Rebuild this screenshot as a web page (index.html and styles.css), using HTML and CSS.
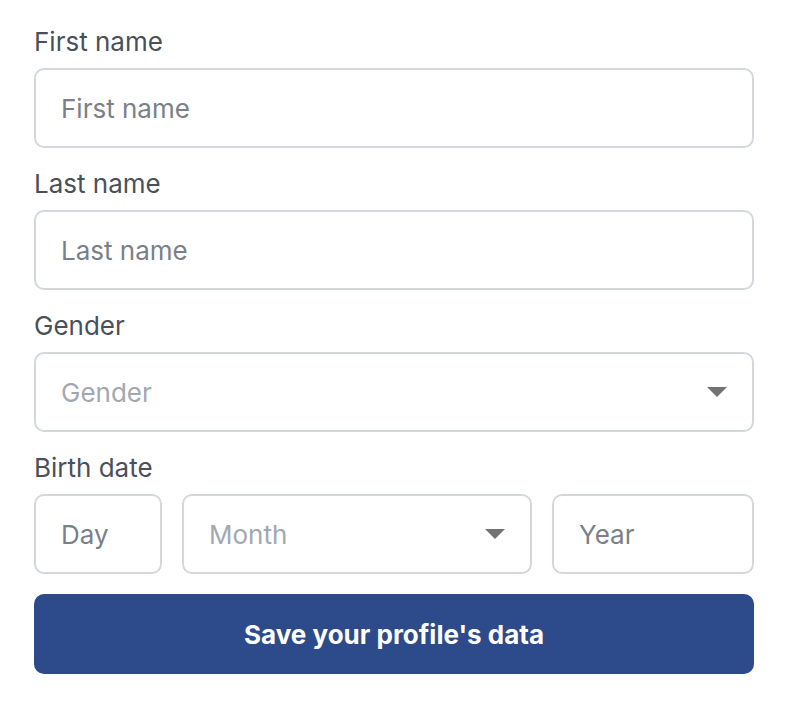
FILE: index.html
```html
<!DOCTYPE html>
<html lang="en">
<head>
<meta charset="utf-8">
<title>Profile</title>
<link rel="stylesheet" href="styles.css">
</head>
<body>
<form class="form">
  <div class="field">
    <label class="label">First name</label>
    <div class="control"><span class="placeholder">First name</span></div>
  </div>
  <div class="field">
    <label class="label">Last name</label>
    <div class="control"><span class="placeholder">Last name</span></div>
  </div>
  <div class="field">
    <label class="label">Gender</label>
    <div class="control select"><span class="placeholder light">Gender</span><span class="caret"></span></div>
  </div>
  <div class="field">
    <label class="label">Birth date</label>
    <div class="date-row">
      <div class="control"><span class="placeholder">Day</span></div>
      <div class="control select"><span class="placeholder light">Month</span><span class="caret"></span></div>
      <div class="control"><span class="placeholder">Year</span></div>
    </div>
  </div>
  <button type="button" class="btn">Save your profile's data</button>
</form>
</body>
</html>
```
FILE: styles.css
```css
* { box-sizing: border-box; }
html, body { margin: 0; background: #ffffff; }
body {
  font-family: Inter, "Noto Sans", sans-serif;
  padding: 24px 32px 0 34px;
}
.form { width: 720px; display: flex; flex-direction: column; }
.field { display: flex; flex-direction: column; margin-bottom: 18px; }
.field:last-of-type { margin-bottom: 20px; }
.label {
  font-size: 26px;
  line-height: 36px;
  color: #4a5059;
  margin-bottom: 8px;
}
.control {
  height: 80px;
  border: 2px solid #d4d8de;
  border-radius: 10px;
  display: flex;
  align-items: center;
  padding: 0 24px 0 25px;
  background: #fff;
}
.placeholder {
  font-size: 26px;
  color: #7a8089;
  flex: 1;
}
.placeholder.light { color: #a3a8b0; }
.caret {
  width: 0; height: 0;
  border-left: 10px solid transparent;
  border-right: 10px solid transparent;
  border-top: 10px solid #737373;
  margin-right: 1px;
}
.date-row {
  display: grid;
  grid-template-columns: 128px 350px 1fr;
  gap: 20px;
}
.btn {
  height: 80px;
  border: none;
  border-radius: 10px;
  background: #2d4a8a;
  color: #ffffff;
  font-family: Inter, "Noto Sans", sans-serif;
  font-weight: 700;
  font-size: 26px;
  width: 100%;
  padding: 0;
}
```
